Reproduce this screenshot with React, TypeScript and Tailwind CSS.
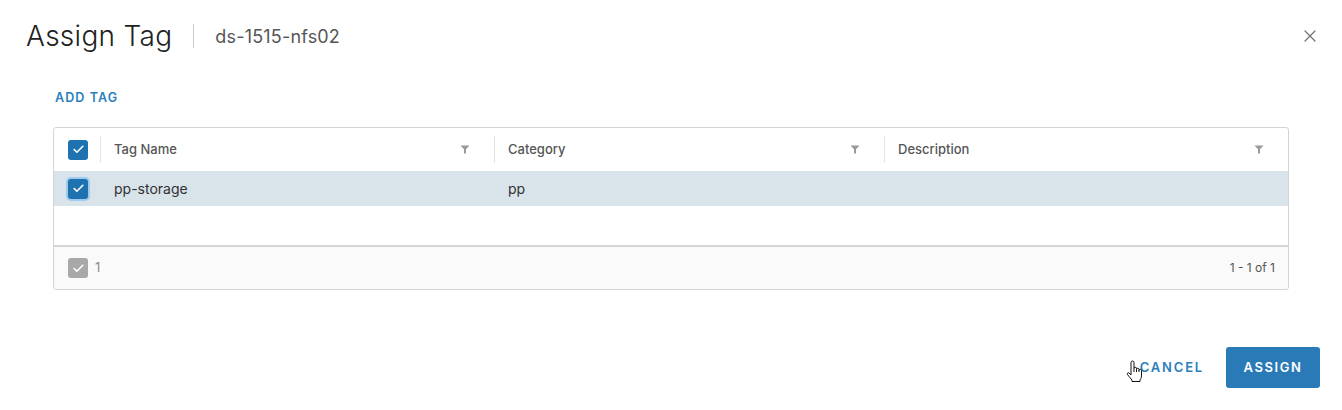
import { Check, X } from "lucide-react";

const COLS = [
  { label: "Tag Name", w: "w-[394px]" },
  { label: "Category", w: "w-[390px]" },
  { label: "Description", w: "flex-1" },
];

function Box({ gray, focus }: { gray?: boolean; focus?: boolean }) {
  return (
    <span
      className={`flex h-[20px] w-[20px] items-center justify-center rounded-[3px] ${
        gray ? "bg-[#a8a8a8]" : "bg-[#1f72b0]"
      } ${focus ? "ring-2 ring-[#9fcbee]" : ""}`}
    >
      <Check size={13} strokeWidth={3} className="text-white" />
    </span>
  );
}

function Funnel() {
  return (
    <svg width="10" height="9" viewBox="0 0 10 9">
      <path d="M0.5 0.5h9L6 4.2V8.5H4V4.2z" fill="#9a9a9a" />
    </svg>
  );
}

// mouse pointer sitting over the cancel link
function Hand() {
  return (
    <svg width="18" height="23" viewBox="0 0 18 23" className="absolute left-[1126px] top-[360px]">
      <path
        d="M5 2.5a1.5 1.5 0 0 1 3 0V8.5a1.25 1.25 0 0 1 2.5 0V9.5a1.25 1.25 0 0 1 2.5 0V10.5a1.25 1.25 0 0 1 2.5 0V16c0 2-1 3-1.5 4V21.5H6V20C5 19 3 16.5 1.5 14.5c-.8-1.1.5-2.3 1.6-1.4L5 15z"
        fill="#fff"
        stroke="#111"
        strokeWidth="1"
        strokeLinejoin="round"
      />
      <path d="M8 8.5V12M10.5 9.5V12M13 10.5V12" stroke="#111" strokeWidth="1" fill="none" />
    </svg>
  );
}

export default function App() {
  return (
    <div className="relative h-[410px] w-[1342px] bg-white font-['Inter','Liberation_Sans',sans-serif] text-[#313131]">
      <div className="flex h-[72px] items-center pl-[26px] pr-[22px]">
        <h1 className="text-[28px] font-light tracking-[0.01em] text-[#222]">Assign Tag</h1>
        <span className="mx-[21px] h-[24px] w-px bg-[#ccc]" />
        <span className="text-[18px] tracking-[0.01em] text-[#565656]">ds-1515-nfs02</span>
        <X size={20} strokeWidth={1.5} className="ml-auto text-[#747474]" />
      </div>

      <div className="mt-[20px] pl-[55px] text-[12.5px] font-semibold leading-[12px] tracking-[0.09em] text-[#2a7fbd]">
        ADD TAG
      </div>

      <div className="ml-[53px] mt-[23px] w-[1236px] overflow-hidden rounded-[3px] border border-[#d4d4d4]">
        <div className="flex h-[43px] items-center">
          <div className="flex w-[46px] justify-center pl-[2px]">
            <Box />
          </div>
          {COLS.map((c) => (
            <div key={c.label} className={`flex h-[27px] items-center border-l border-[#e4e4e4] pl-[13px] pr-[24px] ${c.w}`}>
              <span className="text-[13px] font-medium text-[#565656]">{c.label}</span>
              <span className="ml-auto">
                <Funnel />
              </span>
            </div>
          ))}
        </div>
        <div className="flex h-[35px] items-center bg-[#d9e3ea] text-[14px]">
          <div className="flex w-[46px] justify-center pl-[2px]">
            <Box focus />
          </div>
          <div className="w-[394px] pl-[14px]">pp-storage</div>
          <div className="w-[390px] pl-[14px]">pp</div>
        </div>
        <div className="h-[41px] border-b-2 border-[#d4d4d4]" />
        <div className="flex h-[42px] items-center bg-[#fafafa] pl-[14px] pr-[13px] text-[13px] text-[#8c8c8c]">
          <Box gray />
          <span className="ml-[7px]">1</span>
          <span className="ml-auto text-[12px] text-[#565656]">1 - 1 of 1</span>
        </div>
      </div>

      <div className="mt-[57px] flex items-center justify-end pr-[22px]">
        <span className="mr-[22px] text-[13px] font-semibold tracking-[0.14em] text-[#2a7fbd]">CANCEL</span>
        <button className="h-[41px] w-[94px] rounded-[3px] bg-[#2a7ab7] text-[13px] font-semibold tracking-[0.12em] text-white">
          ASSIGN
        </button>
      </div>

      <Hand />
    </div>
  );
}
